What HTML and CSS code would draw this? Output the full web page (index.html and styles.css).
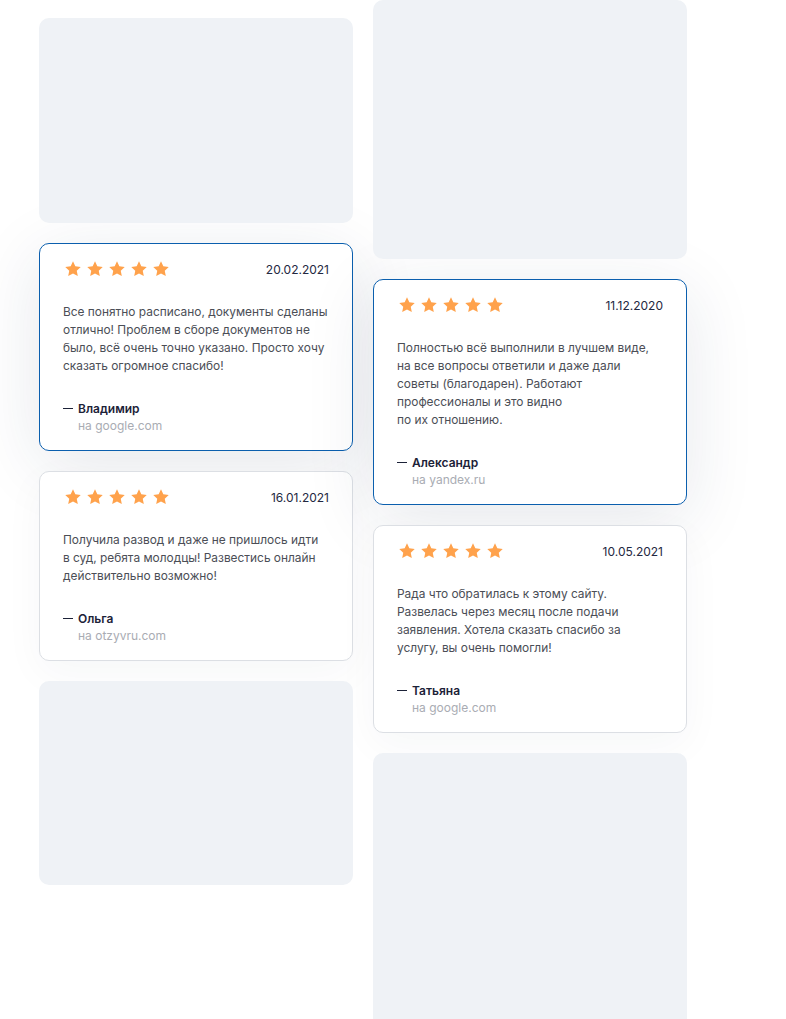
FILE: index.html
```html
<!DOCTYPE html>
<html lang="ru">
<head>
<meta charset="utf-8">
<link rel="stylesheet" href="styles.css">
</head>
<body>
<svg width="0" height="0" class="defs">
  <defs>
    <symbol id="star" viewBox="0 0 24 24">
      <path d="M12 1.8l3.1 6.6 7.2.9-5.3 5 1.4 7.1L12 17.9l-6.4 3.5 1.4-7.1-5.3-5 7.2-.9z" fill="#ffa24c"/>
    </symbol>
  </defs>
</svg>
<div class="wall">
  <div class="col col-left">
    <div class="ph ph-a"></div>
    <div class="card active">
      <div class="head">
        <div class="stars"><svg><use href="#star"/></svg><svg><use href="#star"/></svg><svg><use href="#star"/></svg><svg><use href="#star"/></svg><svg><use href="#star"/></svg></div>
        <div class="date">20.02.2021</div>
      </div>
      <p class="text">Все понятно расписано, документы сделаны<br>отлично! Проблем в сборе документов не<br>было, всё очень точно указано. Просто хочу<br>сказать огромное спасибо!</p>
      <div class="author"><span class="dash"></span>Владимир</div>
      <div class="source">на google.com</div>
    </div>
    <div class="card">
      <div class="head">
        <div class="stars"><svg><use href="#star"/></svg><svg><use href="#star"/></svg><svg><use href="#star"/></svg><svg><use href="#star"/></svg><svg><use href="#star"/></svg></div>
        <div class="date">16.01.2021</div>
      </div>
      <p class="text">Получила развод и даже не пришлось идти<br>в суд, ребята молодцы! Развестись онлайн<br>действительно возможно!</p>
      <div class="author"><span class="dash"></span>Ольга</div>
      <div class="source">на otzyvru.com</div>
    </div>
    <div class="ph ph-c"></div>
  </div>
  <div class="col col-right">
    <div class="ph ph-b"></div>
    <div class="card active">
      <div class="head">
        <div class="stars"><svg><use href="#star"/></svg><svg><use href="#star"/></svg><svg><use href="#star"/></svg><svg><use href="#star"/></svg><svg><use href="#star"/></svg></div>
        <div class="date">11.12.2020</div>
      </div>
      <p class="text">Полностью всё выполнили в лучшем виде,<br>на все вопросы ответили и даже дали<br>советы (благодарен). Работают<br>профессионалы и это видно<br>по их отношению.</p>
      <div class="author"><span class="dash"></span>Александр</div>
      <div class="source">на yandex.ru</div>
    </div>
    <div class="card">
      <div class="head">
        <div class="stars"><svg><use href="#star"/></svg><svg><use href="#star"/></svg><svg><use href="#star"/></svg><svg><use href="#star"/></svg><svg><use href="#star"/></svg></div>
        <div class="date">10.05.2021</div>
      </div>
      <p class="text">Рада что обратилась к этому сайту.<br>Развелась через месяц после подачи<br>заявления. Хотела сказать спасибо за<br>услугу, вы очень помогли!</p>
      <div class="author"><span class="dash"></span>Татьяна</div>
      <div class="source">на google.com</div>
    </div>
    <div class="ph ph-d"></div>
  </div>
</div>
</body>
</html>
```

FILE: styles.css
```css
* { box-sizing: border-box; }
html, body {
  margin: 0;
  padding: 0;
  background: #ffffff;
  overflow: hidden;
  height: 1019px;
}
body {
  font-family: Inter, "Noto Sans", sans-serif;
  -webkit-font-smoothing: antialiased;
}
.defs { position: absolute; }
.wall {
  display: flex;
  gap: 20px;
  padding-left: 39px;
  align-items: flex-start;
}
.col {
  width: 314px;
  display: flex;
  flex-direction: column;
  gap: 20px;
}
.col-left { padding-top: 18px; }
.ph {
  background: #eff2f6;
  border-radius: 10px;
  position: relative;
  z-index: 1;
}
.ph-a { height: 205px; }
.ph-b { height: 259px; }
.ph-c { height: 204px; }
.ph-d { height: 280px; }
.card {
  background: #fff;
  border: 1px solid #dcdfe4;
  border-radius: 10px;
  padding: 17px 23px 15px 23px;
  box-shadow: 0 12px 40px rgba(30, 45, 80, 0.04);
}
.card.active {
  border-color: #0b5fae;
  box-shadow: 0 14px 70px rgba(30, 45, 80, 0.11);
}
.head {
  display: flex;
  justify-content: space-between;
  align-items: center;
  height: 16px;
}
.stars {
  display: flex;
  gap: 4px;
  margin-left: 1px;
}
.stars svg {
  width: 18px;
  height: 18px;
}
.date {
  font-size: 12px;
  color: #232841;
}
.text {
  margin: 26px 0 24px 0;
  font-size: 11.9px;
  line-height: 18px;
  color: #4b4e56;
  white-space: nowrap;
}
.author {
  display: flex;
  align-items: center;
  height: 18px;
  font-size: 12px;
  font-weight: 600;
  color: #1c2238;
}
.dash {
  width: 10px;
  height: 1px;
  background: #1c2238;
  margin-right: 5px;
}
.source {
  height: 18px;
  line-height: 18px;
  font-size: 12px;
  color: #a9acb3;
  padding-left: 15px;
}
```
